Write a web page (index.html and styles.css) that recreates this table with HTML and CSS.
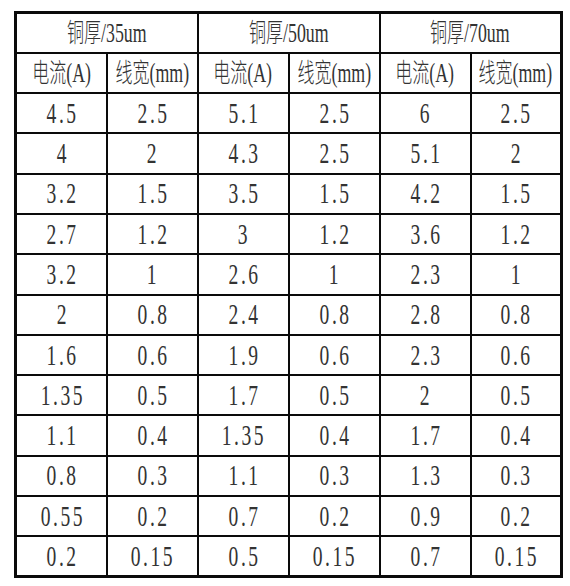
FILE: index.html
```html
<!DOCTYPE html>
<html lang="zh">
<head>
<meta charset="utf-8">
<link rel="stylesheet" href="styles.css">
</head>
<body>
<table class="spec">
  <thead>
    <tr>
      <th colspan="2"><span class="t"><span class="zh">铜厚</span>/35um</span></th>
      <th colspan="2"><span class="t"><span class="zh">铜厚</span>/50um</span></th>
      <th colspan="2"><span class="t"><span class="zh">铜厚</span>/70um</span></th>
    </tr>
    <tr>
      <th><span class="t"><span class="zh">电流</span>(A)</span></th>
      <th><span class="t"><span class="zh">线宽</span>(mm)</span></th>
      <th><span class="t"><span class="zh">电流</span>(A)</span></th>
      <th><span class="t"><span class="zh">线宽</span>(mm)</span></th>
      <th><span class="t"><span class="zh">电流</span>(A)</span></th>
      <th><span class="t"><span class="zh">线宽</span>(mm)</span></th>
    </tr>
  </thead>
  <tbody>
    <tr><td><span class="n">4.5</span></td><td><span class="n">2.5</span></td><td><span class="n">5.1</span></td><td><span class="n">2.5</span></td><td><span class="n">6</span></td><td><span class="n">2.5</span></td></tr>
    <tr><td><span class="n">4</span></td><td><span class="n">2</span></td><td><span class="n">4.3</span></td><td><span class="n">2.5</span></td><td><span class="n">5.1</span></td><td><span class="n">2</span></td></tr>
    <tr><td><span class="n">3.2</span></td><td><span class="n">1.5</span></td><td><span class="n">3.5</span></td><td><span class="n">1.5</span></td><td><span class="n">4.2</span></td><td><span class="n">1.5</span></td></tr>
    <tr><td><span class="n">2.7</span></td><td><span class="n">1.2</span></td><td><span class="n">3</span></td><td><span class="n">1.2</span></td><td><span class="n">3.6</span></td><td><span class="n">1.2</span></td></tr>
    <tr><td><span class="n">3.2</span></td><td><span class="n">1</span></td><td><span class="n">2.6</span></td><td><span class="n">1</span></td><td><span class="n">2.3</span></td><td><span class="n">1</span></td></tr>
    <tr><td><span class="n">2</span></td><td><span class="n">0.8</span></td><td><span class="n">2.4</span></td><td><span class="n">0.8</span></td><td><span class="n">2.8</span></td><td><span class="n">0.8</span></td></tr>
    <tr><td><span class="n">1.6</span></td><td><span class="n">0.6</span></td><td><span class="n">1.9</span></td><td><span class="n">0.6</span></td><td><span class="n">2.3</span></td><td><span class="n">0.6</span></td></tr>
    <tr><td><span class="n">1.35</span></td><td><span class="n">0.5</span></td><td><span class="n">1.7</span></td><td><span class="n">0.5</span></td><td><span class="n">2</span></td><td><span class="n">0.5</span></td></tr>
    <tr><td><span class="n">1.1</span></td><td><span class="n">0.4</span></td><td><span class="n">1.35</span></td><td><span class="n">0.4</span></td><td><span class="n">1.7</span></td><td><span class="n">0.4</span></td></tr>
    <tr><td><span class="n">0.8</span></td><td><span class="n">0.3</span></td><td><span class="n">1.1</span></td><td><span class="n">0.3</span></td><td><span class="n">1.3</span></td><td><span class="n">0.3</span></td></tr>
    <tr><td><span class="n">0.55</span></td><td><span class="n">0.2</span></td><td><span class="n">0.7</span></td><td><span class="n">0.2</span></td><td><span class="n">0.9</span></td><td><span class="n">0.2</span></td></tr>
    <tr><td><span class="n">0.2</span></td><td><span class="n">0.15</span></td><td><span class="n">0.5</span></td><td><span class="n">0.15</span></td><td><span class="n">0.7</span></td><td><span class="n">0.15</span></td></tr>
  </tbody>
</table>
</body>
</html>
```

FILE: styles.css
```css
html, body {
  margin: 0;
  padding: 0;
  background: #ffffff;
}

body {
  padding: 11px 0 0 14px;
}

.spec {
  border-collapse: collapse;
  width: 549px;
  table-layout: fixed;
  border: 3px solid #0a0a0a;
  color: #333333;
  font-family: "Liberation Serif", "Noto Sans CJK SC", serif;
}

.spec tr {
  height: 40.3px;
}

.spec th,
.spec td {
  border: 2px solid #0a0a0a;
  padding: 0;
  text-align: center;
  vertical-align: middle;
  font-weight: normal;
  line-height: 1;
}

.t,
.n {
  display: inline-block;
  transform: scale(0.85, 1.3);
}

.t {
  font-size: 21px;
}

.zh {
  font-family: "Noto Sans CJK SC", sans-serif;
  font-size: 20px;
  font-weight: 300;
}

.n {
  font-size: 23px;
  letter-spacing: 3px;
  padding-left: 3px;
}
```
